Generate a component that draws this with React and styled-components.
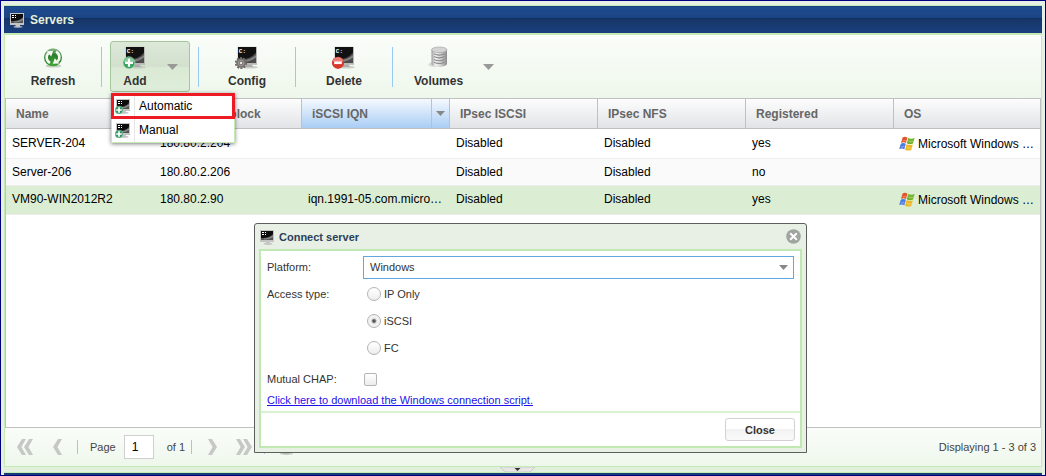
import React, { useState } from 'react';
import styled, { css, createGlobalStyle } from 'styled-components';

const GlobalStyle = createGlobalStyle`
  *, *::before, *::after {
    box-sizing: border-box;
  }

  body {
    margin: 0;
    color: #000;
    font-family: "Liberation Sans", Arial, sans-serif;
    font-size: 12px;
    line-height: 14px;
  }

  button, input, select {
    margin: 0;
    font: inherit;
    color: inherit;
  }

  svg {
    display: block;
    flex: none;
  }
`;

const colors = {
  line: '#c5eab5',
  grid: '#c0c0c0',
  frame: '#e7f0e4',
  text: '#333',
};

const barBackground = css`
  background: linear-gradient(#fafdf9, #eef7ec);
`;

/**
 * Page frame.
 */

const Frame = styled.div`
  display: flex;
  flex-direction: column;
  min-height: 100vh;
  padding: 4px 3px 0;
  border: 1px solid #000080;
  background: ${colors.frame};
`;

const TitleBar = styled.header`
  display: flex;
  align-items: center;
  gap: 5px;
  height: 28px;
  padding: 0 5px;
  border-top: 1px solid ${colors.line};
  background: linear-gradient(#153a6d 0, #1d4b8f 1px, #1b4485 12px, #12305e 12px, #173769 14px, #1a3f80 27px);
  color: #e6f1df;
`;

const Title = styled.h1`
  margin: 0;
  font-size: 12px;
  font-weight: bold;
`;

const Panel = styled.main`
  display: flex;
  flex: 1;
  flex-direction: column;
  border: 1px solid ${colors.line};
  border-top-width: 2px;
`;

const BottomStrip = styled.footer`
  display: flex;
  justify-content: center;
  height: 8px;
  padding-right: 12px;
  border-bottom: 2px solid #163c78;
  background: linear-gradient(#e1f0dc 5px, ${colors.line} 5px);
`;

const Collapse = styled.button`
  display: block;
  height: 5px;
  padding: 0;
  border: 0;
  background: none;
`;

/**
 * Toolbar.
 */

const Toolbar = styled.div`
  display: flex;
  align-items: center;
  gap: 8px;
  padding: 6px 8px;
  ${barBackground}
`;

const ToolSlot = styled.div`
  position: relative;
`;

const ToolButton = styled.button`
  display: flex;
  align-items: center;
  justify-content: ${props => (props.$split ? 'flex-start' : 'center')};
  gap: 20px;
  min-width: 80px;
  padding: 4px 10px 3px ${props => (props.$split ? 12 : 10)}px;
  border: 1px solid ${props => (props.$active ? '#a5c69b' : 'transparent')};
  border-radius: 3px;
  background: ${props => (props.$active ? 'linear-gradient(#dce8d8, #d3e0ce 50%, #d9e9d3 50%, #dfeeda)' : 'none')};
  color: ${colors.text};
  font-weight: bold;
`;

const ToolFace = styled.span`
  display: flex;
  flex-direction: column;
  align-items: center;
  gap: 4px;
`;

const Separator = styled.span`
  width: 1px;
  height: ${props => (props.$small ? 14 : 40)}px;
  background: #99c8f2;
`;

const Menu = styled.div`
  position: absolute;
  z-index: 2;
  top: 52px;
  left: 1px;
  width: 124px;
  border: 1px solid ${colors.line};
  background: linear-gradient(90deg, #fff 22px, #e6e6e6 22px, #e6e6e6 23px, #fff 23px);
  box-shadow: 0 1px 4px rgba(0, 0, 0, 0.5);
`;

const MenuItem = styled.button`
  display: flex;
  align-items: center;
  gap: 8px;
  width: 100%;
  height: 24px;
  padding: 0 3px;
  border: 0;
  background: none;
  outline: ${props => (props.$marked ? '3px solid #ed1c24' : 'none')};
  outline-offset: -2px;
`;

/**
 * Server grid.
 */

const GridArea = styled.div`
  flex: 1;
  border: 1px solid ${colors.grid};
  background: #fff;
`;

const Table = styled.table`
  width: 100%;
  border-collapse: separate;
  border-spacing: 0;
  table-layout: fixed;
`;

const Th = styled.th`
  width: 148px;
  height: 30px;
  padding: 0;
  border-right: 1px solid ${colors.grid};
  border-bottom: 1px solid ${colors.grid};
  background: ${props => (props.$sorted ? 'linear-gradient(#f5f9ff, #a9cdf4)' : 'linear-gradient(#fdfdfd, #e1e3e6)')};
  color: #666;
  text-align: left;

  &:last-child {
    width: auto;
    border-right: 0;
  }
`;

const ThInner = styled.div`
  display: flex;
  align-items: center;
  height: 29px;
  padding-left: 10px;
`;

const HeadMenu = styled.button`
  display: flex;
  align-items: center;
  justify-content: center;
  width: 18px;
  height: 29px;
  margin-left: auto;
  padding: 0;
  border: 0;
  border-left: 1px solid ${colors.grid};
  background: none;
`;

const Row = styled.tr`
  background: ${props => (props.$selected ? '#dbeed4' : '#fff')};

  &:nth-child(2) {
    background: #fafafa;
  }
`;

const Td = styled.td`
  padding: 6px;
  border-bottom: 1px solid #ededed;
  overflow: hidden;
  text-overflow: ellipsis;
  vertical-align: top;
  white-space: nowrap;

  tr:first-child > & {
    padding-top: 7px;
  }

  &:last-child {
    padding-right: 3px;
    padding-left: 5px;
  }
`;

const OsCell = styled.div`
  display: flex;
  align-items: center;
  gap: 3px;
  height: 16px;
`;

const OsName = styled.span`
  overflow: hidden;
  text-overflow: ellipsis;
`;

/**
 * Pager.
 */

const Pager = styled.nav`
  display: flex;
  align-items: center;
  height: 38px;
  padding: 0 5px 0 11px;
  ${barBackground}
  color: #444;
  font-size: 11px;
`;

const PagerButton = styled.button`
  display: flex;
  align-items: center;
  justify-content: center;
  width: ${props => props.$width || 18}px;
  height: 24px;
  padding: 0;
  border: 0;
  background: none;
`;

const PagerGroup = styled.div`
  display: flex;
  align-items: center;
  gap: ${props => props.$gap}px;
  margin-right: ${props => props.$after || 0}px;
`;

const PageLabel = styled.label`
  display: flex;
  align-items: center;
  gap: 8px;
`;

const PageInput = styled.input`
  width: 30px;
  height: 24px;
  padding: 0 7px;
  border: 1px solid #cfcfcf;
  background: #fff;
  color: #000;
  font-size: 12px;
`;

const Displaying = styled.span`
  margin-left: auto;
`;

/**
 * Connect dialog.
 */

const Dialog = styled.section`
  position: absolute;
  z-index: 3;
  top: 223px;
  left: 254px;
  width: 553px;
  padding: 0 4px 4px;
  border: 1px solid #5c605b;
  border-radius: 3px 3px 0 0;
  background: #e8f0e6;
  color: ${colors.text};
  font-size: 11px;
`;

const DialogHead = styled.header`
  display: flex;
  align-items: center;
  gap: 4px;
  height: 25px;
  padding: 0 1px 0 0;
`;

const DialogTitle = styled.h2`
  flex: 1;
  margin: 0;
  color: #2c4059;
  font-size: 11px;
`;

const IconButton = styled.button`
  padding: 0;
  border: 0;
  background: none;
`;

const DialogBox = styled.div`
  border: 2px solid #bfe8b2;
  background: #fff;
`;

const Form = styled.form`
  display: flex;
  flex-direction: column;
  padding: 5px 6px 4px;
`;

const Field = styled.div`
  display: grid;
  grid-template-columns: 96px 1fr;
  margin-bottom: ${props => props.$after}px;
`;

const FieldLabel = styled.label`
  align-self: start;
  line-height: ${props => (props.$tall ? 22 : 18)}px;
`;

const SelectBox = styled.div`
  position: relative;
  display: flex;

  svg {
    position: absolute;
    top: 9px;
    right: 6px;
    pointer-events: none;
  }
`;

const Select = styled.select`
  width: 100%;
  height: 23px;
  padding: 0 20px 2px 6px;
  border: 1px solid #62a7de;
  border-radius: 0;
  background: #fff;
  appearance: none;
`;

const RadioList = styled.div`
  display: flex;
  flex-direction: column;
  gap: 9px;
  padding-left: 4px;
`;

const RadioLabel = styled.label`
  display: flex;
  align-items: center;
  gap: 3px;
  height: 18px;
`;

const Radio = styled.input`
  width: 14px;
  height: 14px;
  border: 1px solid #b3b3b3;
  border-radius: 50%;
  background: linear-gradient(#fff, #ededed);
  appearance: none;

  &:checked {
    background: radial-gradient(circle, #555 1px, #f1f1f1 3px);
  }
`;

const Checkbox = styled.input`
  align-self: center;
  width: 13px;
  height: 13px;
  margin: 0 0 0 1px;
  border: 1px solid #b5b5b5;
  border-radius: 2px;
  background: linear-gradient(#fff, #ececec);
  appearance: none;

  &:checked {
    background: #777;
  }
`;

const ScriptLink = styled.a`
  align-self: flex-start;
  color: #1d12e8;
`;

const DialogFoot = styled.footer`
  display: flex;
  justify-content: flex-end;
  padding: 5px;
  border-top: 2px solid #d9f2d0;
`;

const CloseButton = styled.button`
  width: 70px;
  height: 23px;
  padding: 0;
  border: 1px solid #d2d2d2;
  border-radius: 3px;
  background: linear-gradient(#fff 50%, #f2f2f2 50%, #fafafa);
  color: ${colors.text};
  font-weight: bold;
`;

/**
 * Icons.
 */

const Caret = ({ width = 11, height = 6, color = '#999' }) => (
  <svg width={width} height={height} viewBox="0 0 10 6" preserveAspectRatio="none">
    <path d="M0 0H10L5 6Z" fill={color} />
  </svg>
);

const Gear = () => (
  <g>
    <circle cx="5" cy="17" r="5.2" fill="none" stroke="#6b6562" strokeWidth="1.8" strokeDasharray="2 1.27" />
    <circle cx="5" cy="17" r="4.8" fill="#77716e" />
    <circle cx="5" cy="17" r="2.8" fill="none" stroke="#a09a97" strokeWidth="1" />
    <circle cx="5" cy="17" r="1.3" fill="#e6e3e1" />
  </g>
);

const Plus = () => (
  <g>
    <circle cx="5" cy="16.8" r="6" fill="#3aa561" stroke="#b9dcc2" strokeWidth="0.7" />
    <path d="M-0.3 15.8A5.5 5.5 0 0 1 10.3 15.8Q5 18 -0.3 15.8Z" fill="#a6dbb4" opacity="0.7" />
    <path d="M5 12.8V20.8M1 16.8H9" stroke="#fff" strokeWidth="2.2" />
  </g>
);

const Minus = () => (
  <g>
    <circle cx="5" cy="16.8" r="6.1" fill="#d8372b" />
    <path d="M-0.4 15.3A5.6 5.6 0 0 1 10.4 15.3Q5 17 -0.4 15.3Z" fill="#f0948a" opacity="0.8" />
    <path d="M1.2 16.8H8.8" stroke="#fff" strokeWidth="2.6" />
  </g>
);

const badges = { plus: Plus, minus: Minus, gear: Gear };

const MonitorIcon = ({ badge }) => {
  const Badge = badges[badge];
  return (
    <svg width="24" height="24" viewBox="-1 0 24 24" overflow="visible">
      <ellipse cx="14" cy="21.2" rx="8" ry="1.4" fill="#bfc4bd" opacity="0.8" />
      <path d="M10 18H15.5L17 21H8.5Z" fill="#adadad" />
      <rect x="1.6" y="0.8" width="19.4" height="18" fill="#b9b9b9" />
      <rect x="2" y="1" width="18" height="16" fill="#111" />
      <path d="M2 13.5Q14 14 20 6.5V17H2Z" fill="#4d4d4d" />
      <path d="M7 14.5Q15 13.5 20 9V11.5Q15 15.5 8 15.8Z" fill="#858585" />
      <text x="2.8" y="6.6" fill="#fff" fontFamily="Liberation Mono, monospace" fontSize="6" fontWeight="bold">C:</text>
      {Badge && <Badge />}
    </svg>
  );
};

const SmallMonitorIcon = ({ badge }) => (
  <svg width="16" height="16" viewBox="0 0 16 16">
    <ellipse cx="9" cy="14.8" rx="4.5" ry="0.9" fill="#bdbdbd" />
    <rect x="6.5" y="12" width="4.5" height="2.4" fill="#c9c9c9" />
    <rect x="1" y="1" width="14" height="12" fill="#c4c4c4" />
    <rect x="2" y="2" width="12" height="9" fill="#0c0c0c" />
    <path d="M2 9Q10 9.5 14 5V11H2Z" fill="#555" />
    <path d="M5 9.5Q10 9.5 14 6.5V8Q10 10.5 5 10.5Z" fill="#909090" />
    <path d="M3 3.5H5M3 5.5H5M6 3.5H7M6 5.5H7" stroke="#fff" />
    {badge && (
      <g>
        <circle cx="4" cy="12" r="3.9" fill="#2d9560" stroke="#a9d3b8" strokeWidth="0.5" />
        <path d="M4 9.2V14.8M1.2 12H6.8" stroke="#fff" strokeWidth="1.7" />
      </g>
    )}
  </svg>
);

const RefreshIcon = ({ size = 24, muted }) => (
  <svg width={size} height={size} viewBox="0 0 24 24">
    <defs>
      <radialGradient id={muted ? 'ballMuted' : 'ball'} cx="0.5" cy="0.9" r="0.9">
        <stop offset="0" stopColor={muted ? '#bbb' : '#43a838'} />
        <stop offset="0.6" stopColor={muted ? '#999' : '#2a7d2a'} />
        <stop offset="1" stopColor={muted ? '#ccc' : '#8fb98c'} />
      </radialGradient>
    </defs>
    <ellipse cx="12.5" cy="20" rx="8" ry="1.6" fill="#c6cfc3" />
    <circle cx="12" cy="11.3" r="9" fill={`url(#${muted ? 'ballMuted' : 'ball'})`} />
    <path d="M9 17C5 14.6 4.6 9.6 7.6 7.2" fill="none" stroke="#f4faf2" strokeWidth="2.6" />
    <path d="M5.6 5.2L12.2 4.8L10.2 10.4Z" fill="#f4faf2" />
    <path d="M15 5.6C19 8 19.4 13 16.4 15.4" fill="none" stroke="#f4faf2" strokeWidth="2.6" />
    <path d="M18.4 17.4L11.8 17.8L13.8 12.2Z" fill="#f4faf2" />
  </svg>
);

const VolumesIcon = () => (
  <svg width="24" height="24" viewBox="0 0 24 24">
    <defs>
      <linearGradient id="drum">
        <stop offset="0" stopColor="#9a9a9a" />
        <stop offset="0.25" stopColor="#f4f4f4" />
        <stop offset="0.6" stopColor="#cfcfcf" />
        <stop offset="1" stopColor="#8a8a8a" />
      </linearGradient>
    </defs>
    <ellipse cx="9" cy="18.5" rx="7.5" ry="2.4" fill="#d3d8d1" />
    <path d="M4.5 3.6V17.6C4.5 22 20 22 20 17.6V3.6Z" fill="url(#drum)" />
    <path
      d="M7 7.8Q12.2 10.4 17.5 7.8M7 10.6Q12.2 13.2 17.5 10.6M7 13.4Q12.2 16 17.5 13.4M7 16.2Q12.2 18.8 17.5 16.2"
      fill="none"
      stroke="#8a8a8a"
      strokeWidth="1.1"
    />
    <ellipse cx="12.25" cy="3.8" rx="7.7" ry="2.8" fill="#d4d4d4" stroke="#a6a6a6" strokeWidth="0.7" />
  </svg>
);

const WindowsIcon = () => (
  <svg width="16" height="16" viewBox="0 0 16 16">
    <path d="M3.6 1.4Q6 0.2 8.4 1.6L7 7Q4.6 5.7 2 6.9Z" fill="#e2562c" />
    <path d="M9.2 2Q12 3.4 15.6 2L14 7.6Q10.8 8.8 7.8 7.4Z" fill="#73b42c" />
    <path d="M1.8 7.7Q4.4 6.5 6.8 7.8L5.4 13.2Q2.8 12 0.2 13.1Z" fill="#4d7ce2" />
    <path d="M7.6 8.2Q10.6 9.6 13.8 8.4L12.3 14Q9 15.3 6.1 13.7Z" fill="#efb822" />
    <path d="M4 5Q5.6 4.2 7 5M9.4 5Q12 6 14 5.2M2.3 11Q4.2 10.2 5.6 11M8 11.6Q10.4 12.6 12.4 11.8" fill="none" stroke="#fff" strokeWidth="0.9" opacity="0.4" />
  </svg>
);

const Chevron = ({ flip, twice }) => (
  <svg width={twice ? 16 : 9} height="16" viewBox={twice ? '0 0 16 16' : '0 0 9 16'} fill="#c6c8c5">
    <g transform={flip ? `translate(${twice ? 16 : 9} 0) scale(-1 1)` : undefined}>
      <path d="M5 0H9L4.4 8L9 16H5L0 8Z" />
      {twice && <path d="M12 0H16L11.4 8L16 16H12L7 8Z" />}
    </g>
  </svg>
);

const CrossIcon = () => (
  <svg width="15" height="15" viewBox="0 0 15 15">
    <circle cx="7.5" cy="7.5" r="7.3" fill="#a1a5a0" />
    <path d="M4.2 4.2L10.8 10.8M10.8 4.2L4.2 10.8" stroke="#fff" strokeWidth="2" />
  </svg>
);

const HandleIcon = () => (
  <svg width="35" height="5" viewBox="0 0 35 5">
    <path d="M0 0H35L30 5H5Z" fill="#e6e6e6" stroke="#bbb" strokeWidth="0.6" />
    <path d="M14.5 1H20.5L17.5 4Z" fill="#333" />
  </svg>
);

/**
 * Page.
 */

const columns = ['Name', 'IP Address block', 'iSCSI IQN', 'IPsec ISCSI', 'IPsec NFS', 'Registered', 'OS'];

const servers = [
  { name: 'SERVER-204', ip: '180.80.2.204', iqn: '', registered: 'yes', os: 'Microsoft Windows Server 2012' },
  { name: 'Server-206', ip: '180.80.2.206', iqn: '', registered: 'no' },
  {
    name: 'VM90-WIN2012R2',
    ip: '180.80.2.90',
    iqn: 'iqn.1991-05.com.microsoft:vm90-win2012r2',
    registered: 'yes',
    os: 'Microsoft Windows Server 2012',
    selected: true,
  },
];

const Tool = ({ icon, label, split, active, children }) => (
  <ToolSlot>
    <ToolButton type="button" $split={split} $active={active}>
      <ToolFace>
        {icon}
        {label}
      </ToolFace>
      {split && <Caret />}
    </ToolButton>
    {children}
  </ToolSlot>
);

const ServerToolbar = () => (
  <Toolbar>
    <Tool icon={<RefreshIcon />} label="Refresh" />
    <Separator />
    <Tool icon={<MonitorIcon badge="plus" />} label="Add" split active>
      <Menu>
        <MenuItem type="button" $marked>
          <SmallMonitorIcon badge />
          Automatic
        </MenuItem>
        <MenuItem type="button">
          <SmallMonitorIcon badge />
          Manual
        </MenuItem>
      </Menu>
    </Tool>
    <Separator />
    <Tool icon={<MonitorIcon badge="gear" />} label="Config" />
    <Separator />
    <Tool icon={<MonitorIcon badge="minus" />} label="Delete" />
    <Separator />
    <Tool icon={<VolumesIcon />} label="Volumes" split />
  </Toolbar>
);

const ServerGrid = () => (
  <GridArea>
    <Table>
      <thead>
        <tr>
          {columns.map(column => (
            <Th key={column} $sorted={column === 'iSCSI IQN'}>
              <ThInner>
                {column}
                {column === 'iSCSI IQN' && (
                  <HeadMenu type="button" aria-label="Column menu">
                    <Caret width={9} height={5} color="#888" />
                  </HeadMenu>
                )}
              </ThInner>
            </Th>
          ))}
        </tr>
      </thead>
      <tbody>
        {servers.map(server => (
          <Row key={server.name} $selected={server.selected}>
            <Td>{server.name}</Td>
            <Td>{server.ip}</Td>
            <Td>{server.iqn}</Td>
            <Td>Disabled</Td>
            <Td>Disabled</Td>
            <Td>{server.registered}</Td>
            <Td>
              {server.os && (
                <OsCell>
                  <WindowsIcon />
                  <OsName>{server.os}</OsName>
                </OsCell>
              )}
            </Td>
          </Row>
        ))}
      </tbody>
    </Table>
  </GridArea>
);

const ServerPager = () => (
  <Pager>
    <PagerGroup $gap={14} $after={11}>
      <PagerButton type="button" aria-label="First page"><Chevron twice /></PagerButton>
      <PagerButton type="button" aria-label="Previous page"><Chevron /></PagerButton>
    </PagerGroup>
    <PagerGroup $gap={12} $after={13}>
      <Separator $small />
      <PageLabel>
        Page
        <PageInput defaultValue="1" />
      </PageLabel>
    </PagerGroup>
    <PagerGroup $gap={6} $after={11}>
      of 1
      <Separator $small />
    </PagerGroup>
    <PagerGroup $gap={14} $after={11}>
      <PagerButton type="button" aria-label="Next page"><Chevron flip /></PagerButton>
      <PagerButton type="button" aria-label="Last page"><Chevron flip twice /></PagerButton>
    </PagerGroup>
    <PagerGroup $gap={11}>
      <Separator $small />
      <PagerButton type="button" aria-label="Refresh" $width={20}><RefreshIcon size={20} muted /></PagerButton>
    </PagerGroup>
    <Displaying>Displaying 1 - 3 of 3</Displaying>
  </Pager>
);

const ConnectDialog = () => {
  const [access, setAccess] = useState('iSCSI');

  return (
    <Dialog role="dialog" aria-labelledby="connect-title">
      <DialogHead>
        <SmallMonitorIcon />
        <DialogTitle id="connect-title">Connect server</DialogTitle>
        <IconButton type="button" aria-label="Close dialog"><CrossIcon /></IconButton>
      </DialogHead>
      <DialogBox>
        <Form>
          <Field $after={6}>
            <FieldLabel htmlFor="platform" $tall>Platform:</FieldLabel>
            <SelectBox>
              <Select id="platform" defaultValue="Windows">
                <option>Windows</option>
              </Select>
              <Caret width={9} height={5} color="#888" />
            </SelectBox>
          </Field>
          <Field $after={13} role="radiogroup" aria-labelledby="access-type">
            <FieldLabel as="span" id="access-type">Access type:</FieldLabel>
            <RadioList>
              {['IP Only', 'iSCSI', 'FC'].map(type => (
                <RadioLabel key={type}>
                  <Radio type="radio" name="access" checked={access === type} onChange={() => setAccess(type)} />
                  {type}
                </RadioLabel>
              ))}
            </RadioList>
          </Field>
          <Field $after={5}>
            <FieldLabel htmlFor="chap">Mutual CHAP:</FieldLabel>
            <Checkbox id="chap" type="checkbox" />
          </Field>
          <ScriptLink href="#script">Click here to download the Windows connection script.</ScriptLink>
        </Form>
        <DialogFoot>
          <CloseButton type="button">Close</CloseButton>
        </DialogFoot>
      </DialogBox>
    </Dialog>
  );
};

const App = () => (
  <>
    <GlobalStyle />
    <Frame>
      <TitleBar>
        <SmallMonitorIcon />
        <Title>Servers</Title>
      </TitleBar>
      <Panel>
        <ServerToolbar />
        <ServerGrid />
        <ServerPager />
      </Panel>
      <BottomStrip>
        <Collapse type="button" aria-label="Collapse panel"><HandleIcon /></Collapse>
      </BottomStrip>
    </Frame>
    <ConnectDialog />
  </>
);

export default App;
